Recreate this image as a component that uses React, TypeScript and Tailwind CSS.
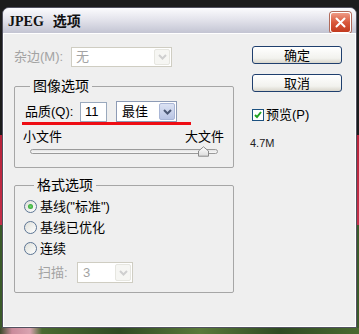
import React from "react";

function Chevron({ disabled }: { disabled?: boolean }) {
  return (
    <svg width="9" height="6" viewBox="0 0 9 6">
      <path
        d="M1 1l3.5 3.5L8 1"
        fill="none"
        stroke={disabled ? "#cfcfcf" : "#4b5873"}
        strokeWidth="2"
      />
    </svg>
  );
}

function DropButton({ disabled }: { disabled?: boolean }) {
  return (
    <span
      className={
        disabled
          ? "m-[1px] flex w-[16px] items-center justify-center rounded-[2px] border border-[#e6e6e0] bg-[#f6f6f3]"
          : "m-[1px] flex w-[16px] items-center justify-center rounded-[2px] border border-[#a9b6d6] bg-[linear-gradient(to_bottom,#dbe2f3,#b9c5e4)]"
      }
    >
      <Chevron disabled={disabled} />
    </span>
  );
}

function Radio({ checked }: { checked?: boolean }) {
  return (
    <span className="flex h-[13px] w-[13px] shrink-0 items-center justify-center rounded-full border border-[#5c7594] bg-[linear-gradient(135deg,#dedfd9,#ffffff)]">
      {checked && (
        <span className="h-[5px] w-[5px] rounded-full bg-[radial-gradient(circle,#6fd36f,#1f9a1f)]" />
      )}
    </span>
  );
}

function Button({ label }: { label: string }) {
  return (
    <div className="flex h-[18px] w-[90px] items-center justify-center rounded-[3px] border border-[#1f3f6e] bg-[linear-gradient(to_bottom,#ffffff,#f2f2ee_70%,#d9d6cc)] text-[13px] leading-none text-black">
      {label}
    </div>
  );
}

export default function App() {
  return (
    <div className="flex h-[334px] w-[359px] flex-col overflow-hidden bg-[linear-gradient(to_bottom,#1c1c1c_0px,#1c1c1c_135px,#b8233a_135px,#c4304a_225px,#3b5a2a_225px)] pl-[2px] pt-[7px] [font-family:'Liberation_Sans','Noto_Sans_CJK_SC',sans-serif]">
      <div className="flex h-[321px] w-[355px] flex-col overflow-hidden rounded-t-[7px] border border-[#51515f] bg-[#c9cad6]">
        {/* title bar */}
        <div className="flex h-[25px] shrink-0 items-center justify-between bg-[linear-gradient(to_bottom,#fbfbfd,#e4e4ec_45%,#cfd0dc_80%,#c3c4d2)] pl-[5px] pr-[5px]">
          <div className="flex items-center pt-[2px] text-[14px] font-bold leading-none text-[#111] [font-family:'Liberation_Serif','Noto_Sans_CJK_SC',serif]">
            <span>JPEG</span>
            <span className="ml-[9px]">选项</span>
          </div>
          <div className="mt-[3px] flex h-[21px] w-[21px] items-center justify-center rounded-[3px] border border-white bg-[linear-gradient(to_bottom,#ee9a86,#d9583b_50%,#c23a1e)] shadow-[0_0_0_1px_#b06a5a]">
            <svg width="11" height="11" viewBox="0 0 11 11">
              <path d="M1.5 1.5l8 8M9.5 1.5l-8 8" stroke="#fff" strokeWidth="2" strokeLinecap="round" />
            </svg>
          </div>
        </div>

        {/* body */}
        <div className="flex flex-1 bg-[#efefef] text-[13px] text-black shadow-[inset_1px_1px_0_#ffffff,inset_-1px_-1px_0_#ffffff]">
          {/* left column */}
          <div className="flex w-[231px] shrink-0 flex-col pl-[11px] pt-[14px]">
            <div className="flex h-[20px] items-center">
              <span className="w-[57px] text-[#a3a3a3]">杂边(M):</span>
              <div className="flex h-[20px] w-[101px] items-stretch border border-[#cfcdc2] bg-white">
                <span className="flex flex-1 items-center pl-[4px] text-[#a3a3a3]">无</span>
                <DropButton disabled />
              </div>
            </div>

            {/* 图像选项 */}
            <div className="relative mt-[19px] flex h-[82px] w-[220px] flex-col rounded-[2px] border border-[#a6a6a6]">
              <span className="-mt-[9px] ml-[15px] w-fit bg-[#efefef] px-[3px] text-[14px] leading-[16px]">
                图像选项
              </span>
              <div className="mt-[7px] flex h-[21px] items-center pl-[10px]">
                <span className="w-[55px]">品质(Q):</span>
                <div className="flex h-[20px] w-[27px] items-center border border-[#9aa9bd] bg-white pl-[4px]">
                  11
                </div>
                <div className="ml-[9px] flex h-[21px] w-[61px] items-stretch border border-[#8d9bb5] bg-white">
                  <span className="flex flex-1 items-center pl-[5px]">最佳</span>
                  <DropButton />
                </div>
              </div>
              <span className="absolute left-[7px] top-[35px] h-[3px] w-[169px] bg-[#ee0d14]" />
              <div className="mt-[7px] flex h-[16px] items-center justify-between pl-[8px] pr-[9px] leading-[16px]">
                <span>小文件</span>
                <span>大文件</span>
              </div>
              <div className="relative ml-[15px] mt-[1px] h-[12px] w-[188px]">
                <div className="absolute left-0 top-[3px] h-[5px] w-full rounded-full border border-[#9a9a9a] bg-[linear-gradient(to_bottom,#e4e4e4,#f8f8f8)]" />
                <svg className="absolute left-[168px] top-0" width="11" height="11" viewBox="0 0 11 11">
                  <defs>
                    <linearGradient id="th" x1="0" y1="0" x2="0" y2="1">
                      <stop offset="0" stopColor="#ffffff" />
                      <stop offset="1" stopColor="#dcdcdc" />
                    </linearGradient>
                  </defs>
                  <path d="M0.5 5L5.5 0.8L10.5 5V10.2H0.5Z" fill="url(#th)" stroke="#8a8a8a" strokeWidth="1" />
                </svg>
              </div>
            </div>

            {/* 格式选项 */}
            <div className="mt-[17px] flex h-[108px] w-[220px] flex-col rounded-[2px] border border-[#a6a6a6]">
              <span className="-mt-[9px] ml-[19px] w-fit bg-[#efefef] px-[3px] text-[14px] leading-[16px]">
                格式选项
              </span>
              <div className="mt-[3px] flex flex-col pl-[9px]">
                <div className="flex h-[21px] items-center gap-[3px]">
                  <Radio checked />
                  <span>基线("标准")</span>
                </div>
                <div className="flex h-[21px] items-center gap-[3px]">
                  <Radio />
                  <span>基线已优化</span>
                </div>
                <div className="flex h-[21px] items-center gap-[3px]">
                  <Radio />
                  <span>连续</span>
                </div>
              </div>
              <div className="mt-[3px] flex h-[21px] items-center pl-[23px]">
                <span className="w-[39px] text-[#a3a3a3]">扫描:</span>
                <div className="flex h-[21px] w-[56px] items-stretch border border-[#cfcdc2] bg-white">
                  <span className="flex flex-1 items-center pl-[5px] text-[#a3a3a3]">3</span>
                  <DropButton disabled />
                </div>
              </div>
            </div>
          </div>

          {/* right column */}
          <div className="ml-[18px] flex flex-col pt-[13px]">
            <Button label="确定" />
            <div className="mt-[10px]">
              <Button label="取消" />
            </div>
            <div className="mt-[15px] flex h-[16px] items-center gap-[2px]">
              <span className="flex h-[12px] w-[12px] items-center justify-center border border-[#1c5180] bg-white">
                <svg width="8" height="8" viewBox="0 0 8 8">
                  <path d="M1 4l2 2 4-5" fill="none" stroke="#21a121" strokeWidth="2" />
                </svg>
              </span>
              <span>预览(P)</span>
            </div>
            <div className="-ml-[2px] mt-[12px] flex h-[16px] items-center text-[11px] text-[#222]">4.7M</div>
          </div>
        </div>
      </div>
      <div className="-ml-[2px] h-[6px] w-[359px] shrink-0 bg-[linear-gradient(to_right,#3a4a2a_0px,#c98a9a_12px,#d9a3b0_30px,#4a6a30_42px,#2f4a22_120px,#5a7a3a_200px,#2f4a22_280px,#4a6a30_359px)]" />
    </div>
  );
}
